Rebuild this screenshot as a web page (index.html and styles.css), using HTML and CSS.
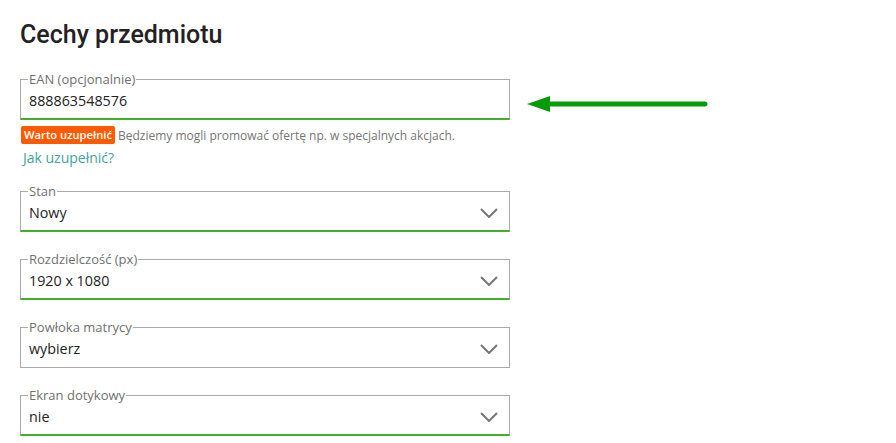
FILE: index.html
```html
<!DOCTYPE html>
<html lang="pl">
<head>
  <meta charset="UTF-8" />
  <title>Cechy przedmiotu</title>
  <link rel="stylesheet" href="styles.css">
</head>
<body>
  <main class="panel">
    <h2 class="title">Cechy przedmiotu</h2>

    <div class="ean-row">
      <fieldset class="field filled">
        <legend>EAN (opcjonalnie)</legend>
        <div class="value">888863548576</div>
      </fieldset>
      <svg class="pointer" width="184" height="20" viewBox="0 0 184 20">
        <line x1="20" y1="10" x2="178" y2="10" stroke="#089b08" stroke-width="5" stroke-linecap="round" />
        <polygon points="0,10 23,2 23,18" fill="#089b08" />
      </svg>
    </div>
    <div class="hint">
      <span class="badge">Warto uzupełnić</span>
      <span>Będziemy mogli promować ofertę np. w specjalnych akcjach.</span>
    </div>
    <a class="help" href="#">Jak uzupełnić?</a>

    <fieldset class="field filled select">
      <legend>Stan</legend>
      <div class="value">Nowy <svg class="chevron" width="18" height="10" viewBox="0 0 18 10"><polyline points="1,1 9,9 17,1" /></svg></div>
    </fieldset>

    <fieldset class="field filled select">
      <legend>Rozdzielczość (px)</legend>
      <div class="value">1920 x 1080 <svg class="chevron" width="18" height="10" viewBox="0 0 18 10"><polyline points="1,1 9,9 17,1" /></svg></div>
    </fieldset>

    <fieldset class="field select">
      <legend>Powłoka matrycy</legend>
      <div class="value">wybierz <svg class="chevron" width="18" height="10" viewBox="0 0 18 10"><polyline points="1,1 9,9 17,1" /></svg></div>
    </fieldset>

    <fieldset class="field filled select">
      <legend>Ekran dotykowy</legend>
      <div class="value">nie <svg class="chevron" width="18" height="10" viewBox="0 0 18 10"><polyline points="1,1 9,9 17,1" /></svg></div>
    </fieldset>
  </main>
</body>
</html>
```

FILE: styles.css
```css
body {
  margin: 0;
  background: #fff;
  font-family: "Open Sans", sans-serif;
  color: #222;
}

.panel {
  padding: 21px 20px 0;
  width: 490px;
}

.title {
  margin: 0 0 22px;
  font-family: Roboto, sans-serif;
  font-weight: 500;
  font-size: 25px;
  line-height: 28px;
  color: #222;
}

.ean-row {
  display: flex;
  align-items: flex-start;
  gap: 17px;
  width: 700px;
}

.ean-row .field {
  width: 490px;
  flex: none;
  margin-bottom: 0;
}

.pointer {
  margin-top: 23px;
  flex: none;
}

.field {
  margin: 0 0 19px;
  padding: 0 8px 7px;
  border: 1px solid #aaa;
  min-width: 0;
  box-sizing: border-box;
  width: 490px;
}

.field.filled {
  border-bottom: 2px solid #43b02a;
}

.field:not(.filled) {
  padding-bottom: 8px;
}

.field legend {
  margin-left: -1px;
  padding: 0 1px;
  font-size: 13px;
  line-height: 16px;
  color: #707070;
}

.value {
  margin-top: 4px;
  font-size: 14.3px;
  line-height: 20px;
  color: #222;
  display: flex;
  align-items: center;
  justify-content: space-between;
}

.chevron {
  margin-right: 3px;
  fill: none;
  stroke: #767676;
  stroke-width: 2;
}

.hint {
  margin-top: 6px;
  display: flex;
  align-items: center;
  gap: 3px;
  font-size: 12px;
  color: #767676;
}

.badge {
  margin-left: 1px;
  background: #ff5a00;
  color: #fff;
  font-weight: 600;
  font-size: 11.2px;
  line-height: 18px;
  padding: 0 3px;
  border-radius: 2px;
}

.help {
  display: block;
  margin: 4px 0 15px 3px;
  font-size: 14px;
  line-height: 20px;
  color: #3fa39e;
  text-decoration: none;
}
```
